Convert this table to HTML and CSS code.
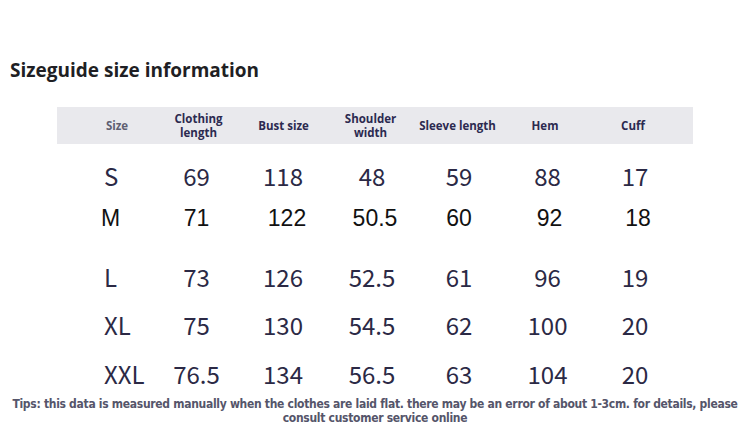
FILE: index.html
```html
<!DOCTYPE html>
<html lang="en">
<head>
<meta charset="utf-8">
<title>Sizeguide</title>
<link rel="stylesheet" href="styles.css">
</head>
<body>
<h1 class="title">Sizeguide size information</h1>
<div class="table">
  <div class="head">
    <div class="hcell hsize">Size</div>
    <div class="hcell">Clothing<br>length</div>
    <div class="hcell">Bust size</div>
    <div class="hcell">Shoulder<br>width</div>
    <div class="hcell">Sleeve length</div>
    <div class="hcell">Hem</div>
    <div class="hcell">Cuff</div>
  </div>
  <div class="row r1">
    <div class="cell first">S</div><div class="cell">69</div><div class="cell">118</div><div class="cell">48</div><div class="cell">59</div><div class="cell">88</div><div class="cell">17</div>
  </div>
  <div class="row r2 alt">
    <div class="cell first">M</div><div class="cell">71</div><div class="cell">122</div><div class="cell">50.5</div><div class="cell">60</div><div class="cell">92</div><div class="cell">18</div>
  </div>
  <div class="row r3">
    <div class="cell first">L</div><div class="cell">73</div><div class="cell">126</div><div class="cell">52.5</div><div class="cell">61</div><div class="cell">96</div><div class="cell">19</div>
  </div>
  <div class="row r4">
    <div class="cell first">XL</div><div class="cell">75</div><div class="cell">130</div><div class="cell">54.5</div><div class="cell">62</div><div class="cell">100</div><div class="cell">20</div>
  </div>
  <div class="row r5">
    <div class="cell first">XXL</div><div class="cell">76.5</div><div class="cell">134</div><div class="cell">56.5</div><div class="cell">63</div><div class="cell">104</div><div class="cell">20</div>
  </div>
</div>
<p class="tips"><span class="tline">Tips: this data is measured manually when the clothes are laid flat. there may be an error of about 1-3cm. for details, please</span><span class="tline">consult customer service online</span></p>
</body>
</html>
```

FILE: styles.css
```css
html, body {
  margin: 0;
  padding: 0;
  background: #ffffff;
}
body {
  width: 750px;
  height: 442px;
  overflow: hidden;
  font-family: "Noto Sans", sans-serif;
}
.title {
  margin: 0;
  padding: 57px 10px 0;
  font-family: "Open Sans", "Noto Sans", sans-serif;
  font-weight: 700;
  font-size: 19px;
  line-height: 26px;
  color: #1f1f24;
}
.table {
  margin-top: 24px;
}
.head {
  margin-left: 57px;
  width: 636px;
  height: 37px;
  box-sizing: border-box;
  padding-left: 20px;
  background: #e9e9ed;
  display: grid;
  grid-template-columns: 80px 83px 87px 87px 87px 88px 88px;
  align-items: center;
}
.hcell {
  text-align: center;
  font-family: "Open Sans", "Noto Sans", sans-serif;
  font-weight: 700;
  font-size: 11.5px;
  line-height: 14px;
  color: #2c2a50;
}
.hsize {
  color: #5f5f72;
}
.row {
  margin-left: 77px;
  height: 40px;
  display: grid;
  grid-template-columns: 78px 83px 90px 88px 86px 91px 84px;
  align-items: center;
  font-family: "Noto Sans CJK SC", "Noto Sans", sans-serif;
  font-size: 24px;
  line-height: 40px;
  color: #2b2945;
}
.cell {
  text-align: center;
}
.first {
  text-align: left;
  padding-left: 27px;
}
.r1 { margin-top: 12px; }
.r2 { margin-top: 2px; }
.r3 { margin-top: 19px; }
.r4 { margin-top: 8px; }
.r5 { margin-top: 9px; }
.alt {
  font-family: "Liberation Sans", Arial, sans-serif;
  font-size: 23px;
  color: #111111;
}
.alt .first { padding-left: 24px; }
.alt .cell:nth-child(3) { padding-left: 8px; }
.alt .cell:nth-child(4) { padding-left: 6px; }
.alt .cell:nth-child(6) { padding-left: 4px; }
.alt .cell:nth-child(7) { padding-left: 6px; }
.tips {
  margin: 3px 0 0;
  display: flex;
  flex-direction: column;
  align-items: center;
  font-family: "DejaVu Sans Condensed", "Liberation Sans", sans-serif;
  font-weight: 700;
  font-size: 12px;
  line-height: 14px;
  letter-spacing: -0.3px;
  color: #55556a;
}
.tline {
  white-space: nowrap;
}
```
